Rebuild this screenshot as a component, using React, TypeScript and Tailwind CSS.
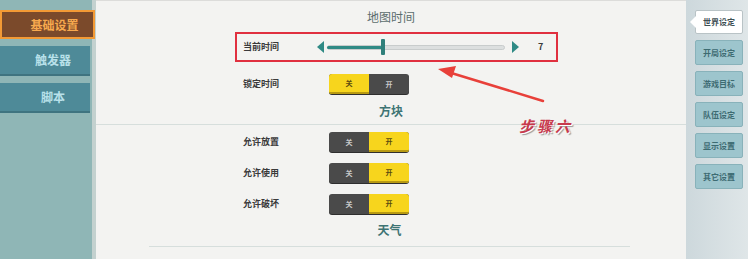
import React from "react";

const cjk = { fontFamily: "'Noto Sans CJK SC', 'Noto Sans', sans-serif" };

function Toggle({ on }: { on: boolean }) {
  return (
    <div className="flex h-[20px] w-[80px] rounded-[3px] overflow-hidden bg-[#4a4a4a] shadow-[0_1px_0_#2e2e2e]">
      <div
        className={`flex-1 flex items-center justify-center text-[7px] font-bold ${
          on ? "text-[#c9c9c9]" : "bg-[#f7d51d] border-b-2 border-[#b89a12] text-[#5a4a10]"
        }`}
      >
        关
      </div>
      <div
        className={`flex-1 flex items-center justify-center text-[7px] font-bold ${
          on ? "bg-[#f7d51d] border-b-2 border-[#b89a12] text-[#5a4a10]" : "text-[#c9c9c9]"
        }`}
      >
        开
      </div>
    </div>
  );
}

function Row({ label, on }: { label: string; on: boolean }) {
  return (
    <div className="flex items-center h-[20px] pl-[147px]">
      <span className="w-[86px] text-[9px] font-bold text-[#3a3a3a]">{label}</span>
      <Toggle on={on} />
    </div>
  );
}

const tabs = ["开局设定", "游戏目标", "队伍设定", "显示设置", "其它设置"];

export default function App() {
  return (
    <div className="flex w-[748px] h-[259px] overflow-hidden bg-[#f3f3f1]" style={cjk}>
      {/* left menu */}
      <aside className="w-[92px] shrink-0 bg-[#8fb6b6] pt-[10px] flex flex-col">
        <div className="w-[95px] h-[29px] bg-[#7b4a2b] border-2 border-[#f39a35] flex items-center justify-center pl-[14px] text-[12px] font-bold text-[#f7a94e] relative z-10">
          基础设置
        </div>
        <div className="mt-[7px] w-[90px] h-[30px] bg-[#4e8a98] border-b-2 border-[#3f7480] flex items-center justify-center pl-[16px] text-[12px] font-bold text-[#b9e1ea]">
          触发器
        </div>
        <div className="mt-[7px] w-[90px] h-[30px] bg-[#4e8a98] border-b-2 border-[#3f7480] flex items-center justify-center pl-[16px] text-[12px] font-bold text-[#b9e1ea]">
          脚本
        </div>
      </aside>
      <div className="w-[4px] shrink-0 bg-[#c3d1cf]" />

      {/* main */}
      <main className="relative flex-1 border-t border-[#dcdcda]">
        <div className="h-[31px] flex items-center justify-center text-[12px] text-[#5b6d6d]">地图时间</div>

        <div className="ml-[139px] w-[323px] h-[30px] border-2 border-[#e0303f] flex items-center pl-[6px]">
          <span className="w-[74px] text-[9px] font-bold text-[#3a3a3a]">当前时间</span>
          <svg width="7" height="12" viewBox="0 0 7 12">
            <polygon points="7,0 0,6 7,12" fill="#2f8a85" />
          </svg>
          <div className="relative ml-[3px] w-[178px] h-[16px] flex items-center">
            <div className="absolute left-0 right-0 h-[5px] bg-[#dcdfdf] border border-[#c8cccc] rounded-full" />
            <div className="absolute left-0 w-[55px] h-[3px] bg-[#2f8a85] rounded-full" />
            <div className="absolute left-[54px] w-[4px] h-[16px] bg-[#2f7f7a] rounded-[1px]" />
          </div>
          <svg width="7" height="12" viewBox="0 0 7 12" className="ml-[7px]">
            <polygon points="0,0 7,6 0,12" fill="#2f8a85" />
          </svg>
          <span className="ml-[19px] text-[9px] font-bold text-[#3a3a3a]">7</span>
        </div>

        <div className="mt-[12px]">
          <Row label="锁定时间" on={false} />
        </div>

        <div className="h-[31px] border-b border-[#d6dedc] flex items-end justify-center pb-[4px] text-[12px] font-bold text-[#3e7474]">
          方块
        </div>

        <div className="mt-[7px] flex flex-col gap-[11px]">
          <Row label="允许放置" on />
          <Row label="允许使用" on />
          <Row label="允许破坏" on />
        </div>

        <div className="ml-[53px] w-[481px] h-[33px] border-b border-[#d6dedc] flex items-end justify-center pb-[7px] text-[12px] font-bold text-[#3e7474]">
          天气
        </div>

        {/* annotation */}
        <svg className="absolute left-0 top-0 pointer-events-none" width="590" height="259">
          <line x1="447" y1="100" x2="352" y2="71" stroke="#e8403a" strokeWidth="2.5" strokeLinecap="round" />
          <polygon points="342,68 360,65 356,77" fill="#e8403a" />
        </svg>
        <div
          className="absolute left-[423px] top-[114px] text-[15px] font-bold italic tracking-[3px] text-[#c8394c]"
          style={{ textShadow: "1px 1px 0 #fff, 2px 2px 1px #9a9a9a" }}
        >
          步骤六
        </div>
      </main>

      {/* right tabs */}
      <aside className="w-[62px] shrink-0 bg-gradient-to-r from-[#cdd8dc] to-[#dfe6e8] pt-[10px] pl-[9px] flex flex-col gap-[6px]">
        <div className="relative w-[48px] h-[24px] bg-white border border-[#b9c3c6] rounded-[2px] flex items-center justify-center text-[8px] font-bold text-[#3f5055]">
          <span className="absolute left-[-6px] top-[5px] w-0 h-0 border-y-[6px] border-y-transparent border-r-[6px] border-r-white" />
          世界设定
        </div>
        {tabs.map((t) => (
          <div
            key={t}
            className="w-[48px] h-[25px] bg-[#9dc5cd] border border-[#88b2ba] rounded-[2px] flex items-center justify-center text-[8px] font-bold text-[#3d6b72]"
          >
            {t}
          </div>
        ))}
      </aside>
    </div>
  );
}
